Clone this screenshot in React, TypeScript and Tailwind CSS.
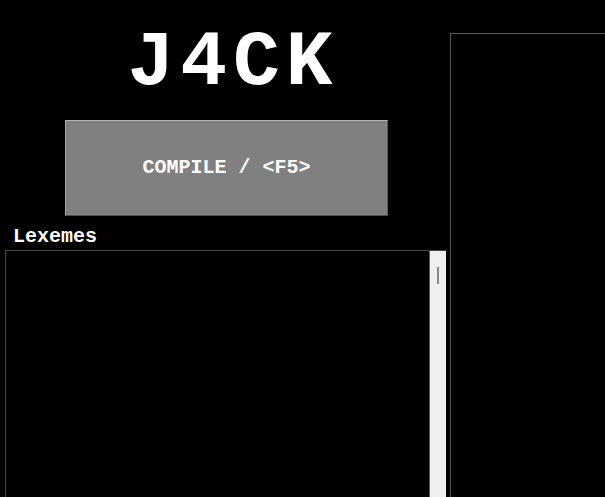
export default function App() {
  return (
    <div className="h-screen w-full bg-black flex overflow-hidden font-['Liberation_Mono','Courier_New',monospace]">
      <div className="w-[446px] shrink-0 flex flex-col">
        <h1 className="pl-[20px] text-center text-white font-bold text-[78px] tracking-[6px] leading-none mt-[24px] h-[96px]">
          J4CK
        </h1>
        <button className="ml-[65px] w-[323px] h-[96px] bg-[#808080] border border-t-[#b4b4b4] border-l-[#a8a8a8] border-b-[#505050] border-r-[#606060] text-white font-bold text-[20px]">
          COMPILE / &lt;F5&gt;
        </button>
        <div className="ml-[13px] mt-[8px] text-white font-bold text-[20px] leading-[26px]">Lexemes</div>
        <div className="ml-[5px] flex-1 border-l border-t border-[#444] flex">
          <div className="flex-1" />
          <div className="w-[17px] bg-[#efefef] relative border-l border-[#5a5a5a]">
            <div className="absolute left-[7px] top-[16px] w-[2px] h-[17px] bg-[#888]" />
          </div>
        </div>
      </div>
      <div className="ml-[4px] mt-[33px] flex-1 border-l border-t border-[#555]" />
    </div>
  );
}
